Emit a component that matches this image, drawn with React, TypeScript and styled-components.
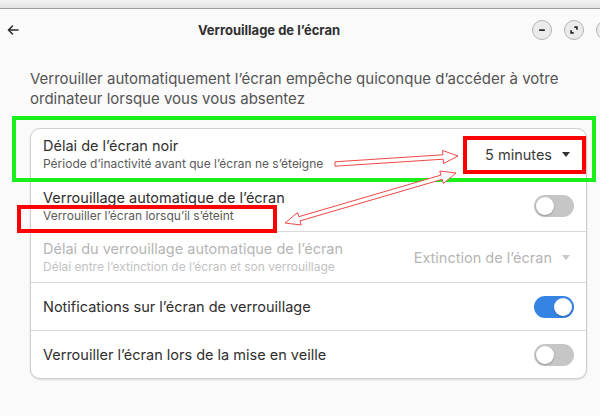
import React from "react";
import styled, { createGlobalStyle } from "styled-components";

const GlobalStyle = createGlobalStyle`
  html, body { margin: 0; padding: 0; background: #fafafa; }
  body { font-family: Inter, "Noto Sans", sans-serif; -webkit-font-smoothing: antialiased; }
  #root { width: 600px; height: 416px; }
`;

const Window = styled.div`
  position: relative;
  width: 600px;
  height: 416px;
  overflow: hidden;
  background: #fafafa;
  display: flex;
  flex-direction: column;
`;

const TopStrip = styled.div`
  height: 8px;
  flex-shrink: 0;
  background: linear-gradient(#f3f3f3, #e3e3e3);
  border-bottom: 1px solid #9c9c9c;
`;

const HeaderBar = styled.header`
  width: 616px;
  height: 41px;
  flex-shrink: 0;
  display: grid;
  grid-template-columns: 36px 1fr 114px;
  align-items: center;
`;

const BackButton = styled.div`
  display: flex;
  align-items: center;
  padding-left: 7px;
  color: #2e2e2e;
`;

const Title = styled.h1`
  margin: 0;
  text-align: center;
  font-size: 13px;
  font-weight: 700;
  color: #303030;
`;

const Controls = styled.div`
  display: flex;
  justify-content: flex-end;
  gap: 12px;
`;

const CircleButton = styled.div`
  width: 20px;
  height: 20px;
  box-sizing: border-box;
  border-radius: 50%;
  background: #ebebeb;
  border: 1px solid #b4b4b4;
  display: flex;
  align-items: center;
  justify-content: center;
  color: #2a2a2a;
`;

const Content = styled.main`
  padding: 19px 13px 0 30px;
  display: flex;
  flex-direction: column;
`;

const Description = styled.p`
  margin: 0 0 19px;
  font-size: 15px;
  line-height: 20px;
  color: #545454;
`;

const Card = styled.section`
  background: #fff;
  border: 1px solid #cfcfcf;
  border-radius: 10px;
  box-shadow: 0 1px 2px rgba(0, 0, 0, 0.14);
  overflow: hidden;
`;

const Row = styled.div<{ $tall?: boolean }>`
  display: flex;
  align-items: center;
  justify-content: space-between;
  box-sizing: border-box;
  min-height: ${(p) => (p.$tall ? "51px" : "48px")};
  padding: 0 12px;
  & + & { border-top: 1px solid #d9d9d9; }
`;

const Labels = styled.div`
  display: flex;
  flex-direction: column;
  gap: 1px;
`;

const RowTitle = styled.div<{ $disabled?: boolean }>`
  font-size: 14.5px;
  line-height: 18px;
  color: ${(p) => (p.$disabled ? "#b5b5b5" : "#2f2f2f")};
`;

const RowSubtitle = styled.div<{ $disabled?: boolean }>`
  font-size: 12px;
  line-height: 16px;
  color: ${(p) => (p.$disabled ? "#c2c2c2" : "#5a5a5a")};
`;

const Dropdown = styled.div<{ $disabled?: boolean }>`
  display: flex;
  align-items: center;
  gap: 10px;
  font-size: 14.5px;
  color: ${(p) => (p.$disabled ? "#b5b5b5" : "#3a3a3a")};
  padding-right: 4px;
`;

const Caret = styled.span<{ $disabled?: boolean }>`
  width: 0;
  height: 0;
  border-left: 4.5px solid transparent;
  border-right: 4.5px solid transparent;
  border-top: 5px solid ${(p) => (p.$disabled ? "#c8c8c8" : "#333")};
`;

const Switch = styled.div<{ $on?: boolean }>`
  width: 40px;
  height: 22px;
  box-sizing: border-box;
  border-radius: 11px;
  padding: 2px;
  background: ${(p) => (p.$on ? "#3584e4" : "#c6c6c6")};
  display: flex;
  justify-content: ${(p) => (p.$on ? "flex-end" : "flex-start")};
  flex-shrink: 0;
`;

const Knob = styled.div`
  width: 18px;
  height: 18px;
  border-radius: 50%;
  background: #fff;
  box-shadow: 0 1px 2px rgba(0, 0, 0, 0.25);
`;

const Highlight = styled.div<{ $color: string; $w: number }>`
  position: absolute;
  box-sizing: border-box;
  border: ${(p) => p.$w}px solid ${(p) => p.$color};
  pointer-events: none;
`;

const Overlay = styled.svg`
  position: absolute;
  left: 0;
  top: 0;
  pointer-events: none;
`;

type Pt = [number, number];

function arrowPoints(a: Pt, b: Pt, double: boolean): string {
  const dx = b[0] - a[0];
  const dy = b[1] - a[1];
  const len = Math.hypot(dx, dy);
  const ux = dx / len;
  const uy = dy / len;
  const nx = -uy;
  const ny = ux;
  const sw = 2.2;
  const hw = 6.5;
  const hl = 15;
  const at = (t: number, n: number): string =>
    `${(a[0] + ux * t + nx * n).toFixed(1)},${(a[1] + uy * t + ny * n).toFixed(1)}`;
  const pts: string[] = [];
  if (double) {
    pts.push(at(0, 0), at(hl, hw), at(hl, sw));
  } else {
    pts.push(at(0, sw));
  }
  pts.push(at(len - hl, sw), at(len - hl, hw), at(len, 0), at(len - hl, -hw), at(len - hl, -sw));
  if (double) {
    pts.push(at(hl, -sw), at(hl, -hw));
  } else {
    pts.push(at(0, -sw));
  }
  return pts.join(" ");
}

const BackIcon = () => (
  <svg width="12" height="12" viewBox="0 0 12 12" fill="none" stroke="currentColor" strokeWidth="1.6" strokeLinecap="round" strokeLinejoin="round">
    <path d="M11 6H1.5M5.5 2L1.5 6l4 4" />
  </svg>
);

const MinIcon = () => (
  <svg width="10" height="10" viewBox="0 0 10 10">
    <rect x="2" y="4.2" width="6" height="1.7" rx="0.6" fill="currentColor" />
  </svg>
);

const MaxIcon = () => (
  <svg width="10" height="10" viewBox="0 0 10 10" fill="none" stroke="currentColor" strokeWidth="1.7">
    <path d="M5.3 2.1H7.9V4.7M4.7 7.9H2.1V5.3" />
  </svg>
);

const CloseIcon = () => (
  <svg width="10" height="10" viewBox="0 0 10 10" fill="none" stroke="currentColor" strokeWidth="1.5">
    <path d="M3 3l4 4M7 3l-4 4" />
  </svg>
);

export default function App() {
  return (
    <>
      <GlobalStyle />
      <Window>
        <TopStrip />
        <HeaderBar>
          <BackButton>
            <BackIcon />
          </BackButton>
          <Title>Verrouillage de l’écran</Title>
          <Controls>
            <CircleButton>
              <MinIcon />
            </CircleButton>
            <CircleButton>
              <MaxIcon />
            </CircleButton>
            <CircleButton>
              <CloseIcon />
            </CircleButton>
          </Controls>
        </HeaderBar>
        <Content>
          <Description>
            Verrouiller automatiquement l’écran empêche quiconque d’accéder à votre ordinateur lorsque vous vous absentez
          </Description>
          <Card>
            <Row $tall>
              <Labels>
                <RowTitle>Délai de l’écran noir</RowTitle>
                <RowSubtitle>Période d’inactivité avant que l’écran ne s’éteigne</RowSubtitle>
              </Labels>
              <Dropdown>
                5 minutes
                <Caret />
              </Dropdown>
            </Row>
            <Row $tall>
              <Labels>
                <RowTitle>Verrouillage automatique de l’écran</RowTitle>
                <RowSubtitle>Verrouiller l’écran lorsqu’il s’éteint</RowSubtitle>
              </Labels>
              <Switch>
                <Knob />
              </Switch>
            </Row>
            <Row $tall>
              <Labels>
                <RowTitle $disabled>Délai du verrouillage automatique de l’écran</RowTitle>
                <RowSubtitle $disabled>Délai entre l’extinction de l’écran et son verrouillage</RowSubtitle>
              </Labels>
              <Dropdown $disabled>
                Extinction de l’écran
                <Caret $disabled />
              </Dropdown>
            </Row>
            <Row>
              <RowTitle>Notifications sur l’écran de verrouillage</RowTitle>
              <Switch $on>
                <Knob />
              </Switch>
            </Row>
            <Row>
              <RowTitle>Verrouiller l’écran lors de la mise en veille</RowTitle>
              <Switch>
                <Knob />
              </Switch>
            </Row>
          </Card>
        </Content>

        <Highlight $color="#19f019" $w={4} style={{ left: 12, top: 116, width: 584, height: 66 }} />
        <Highlight $color="#ff0000" $w={4} style={{ left: 463, top: 136, width: 123, height: 38 }} />
        <Highlight $color="#ff0000" $w={4} style={{ left: 17, top: 205, width: 260, height: 28 }} />
        <Overlay width="600" height="416" viewBox="0 0 600 416">
          <polygon points={arrowPoints([335, 164], [458, 156], false)} fill="#fff" stroke="#f04848" strokeWidth="1" strokeLinejoin="miter" />
          <polygon points={arrowPoints([285, 223], [456, 173], true)} fill="#fff" stroke="#f04848" strokeWidth="1" strokeLinejoin="miter" />
        </Overlay>
      </Window>
    </>
  );
}
